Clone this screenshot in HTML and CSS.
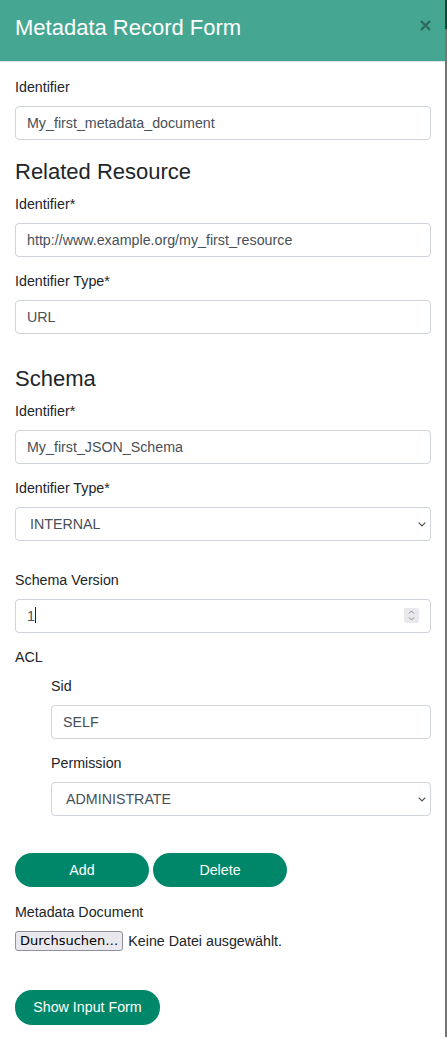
FILE: index.html
```html
<!DOCTYPE html>
<html lang="de">
<head>
<meta charset="utf-8">
<title>Metadata Record Form</title>
<link rel="stylesheet" href="styles.css">
</head>
<body>
<div class="page">
  <div class="modal">
    <div class="modal-header">
      <h2 class="modal-title">Metadata Record Form</h2>
      <button class="close" aria-label="Close">
        <svg width="11" height="11" viewBox="0 0 11 11"><path d="M1 1 L10 10 M10 1 L1 10" stroke="#2c6b5e" stroke-width="2.4" stroke-linecap="butt"/></svg>
      </button>
    </div>
    <div class="modal-body">
      <div class="group">
        <label class="lbl">Identifier</label>
        <input class="field" type="text" value="My_first_metadata_document">
      </div>

      <h3 class="section">Related Resource</h3>
      <div class="group">
        <label class="lbl">Identifier*</label>
        <input class="field" type="text" value="http://www.example.org/my_first_resource">
      </div>
      <div class="group">
        <label class="lbl">Identifier Type*</label>
        <input class="field" type="text" value="URL">
      </div>

      <h3 class="section section-far">Schema</h3>
      <div class="group">
        <label class="lbl">Identifier*</label>
        <input class="field" type="text" value="My_first_JSON_Schema">
      </div>
      <div class="group group-far">
        <label class="lbl">Identifier Type*</label>
        <div class="select-wrap">
          <select class="field select"><option>INTERNAL</option></select>
          <svg class="chev" width="8" height="5" viewBox="0 0 8 5"><path d="M0.7 0.7 L4 4 L7.3 0.7" fill="none" stroke="#505050" stroke-width="1.2"/></svg>
        </div>
      </div>
      <div class="group">
        <label class="lbl">Schema Version</label>
        <div class="select-wrap">
          <input class="field" type="text" value="1">
          <span class="caret"></span>
          <span class="spinner">
            <svg width="15" height="15" viewBox="0 0 15 15"><path d="M5 5.5 L7.5 3 L10 5.5" fill="none" stroke="#8a8a8a" stroke-width="1"/><path d="M5 9.5 L7.5 12 L10 9.5" fill="none" stroke="#8a8a8a" stroke-width="1"/></svg>
          </span>
        </div>
      </div>
      <div class="group group-acl">
        <label class="lbl lbl-acl">ACL</label>
        <div class="acl-list">
          <div class="group">
            <label class="lbl">Sid</label>
            <input class="field" type="text" value="SELF">
          </div>
          <div class="group group-last">
            <label class="lbl">Permission</label>
            <div class="select-wrap">
              <select class="field select"><option>ADMINISTRATE</option></select>
              <svg class="chev" width="8" height="5" viewBox="0 0 8 5"><path d="M0.7 0.7 L4 4 L7.3 0.7" fill="none" stroke="#505050" stroke-width="1.2"/></svg>
            </div>
          </div>
        </div>
      </div>

      <div class="btn-row">
        <button class="btn btn-fixed">Add</button>
        <button class="btn btn-fixed">Delete</button>
      </div>

      <div class="group group-file">
        <label class="lbl">Metadata Document</label>
        <div class="file-row">
          <span class="file-btn">Durchsuchen…</span>
          <span class="file-text">Keine Datei ausgewählt.</span>
        </div>
      </div>

      <button class="btn btn-show">Show Input Form</button>
    </div>
  </div>
  <div class="edge"></div>
</div>
</body>
</html>
```

FILE: styles.css
```css
html, body {
  margin: 0;
  padding: 0;
  background: #ffffff;
}
body {
  font-family: "Liberation Sans", Arial, sans-serif;
  color: #212529;
  overflow: hidden;
}
.page {
  display: flex;
  align-items: flex-start;
  height: 1039px;
}
.modal {
  width: 445px;
  height: 1038px;
  background: #fff;
  border-bottom-left-radius: 4px;
  border-bottom-right-radius: 4px;
}
.edge {
  width: 2px;
  height: 1037px;
  background: linear-gradient(to bottom, #0d4a3b 0, #0d4a3b 29px, #757575 29px, #757575 100%);
}
.modal-header {
  box-sizing: border-box;
  height: 62px;
  background: #45a792;
  border-bottom: 1px solid #dfe3e6;
  display: flex;
  justify-content: space-between;
  align-items: flex-start;
  padding: 15px 14px 0 15px;
}
.modal-title {
  margin: 0;
  font-size: 22px;
  line-height: 26px;
  font-weight: 400;
  color: #ffffff;
}
.close {
  background: none;
  border: 0;
  padding: 0;
  margin-top: 5px;
  width: 11px;
  height: 11px;
  display: flex;
}
.modal-body {
  padding: 14.5px 14px 0 15px;
}
.group {
  margin-bottom: 14px;
}
.group-far {
  margin-bottom: 29px;
}
.lbl {
  display: block;
  font-size: 14.25px;
  line-height: 21px;
  margin-bottom: 8px;
  color: #212529;
}
.lbl-acl {
  margin-bottom: 8px;
}
.acl-list {
  padding-left: 36px;
}
.group-last {
  margin-bottom: 0;
}
.field {
  box-sizing: border-box;
  display: block;
  width: 100%;
  height: 34px;
  padding: 0 11px;
  border: 1px solid #ced4da;
  border-radius: 4px;
  font-family: "Liberation Sans", Arial, sans-serif;
  font-size: 14.25px;
  color: #495057;
  background: #fff;
  outline: none;
}
.select {
  -webkit-appearance: none;
  appearance: none;
  padding-left: 14px;
}
.select-wrap {
  position: relative;
}
.chev {
  position: absolute;
  right: 5px;
  top: 15px;
}
.caret {
  position: absolute;
  left: 20px;
  top: 8px;
  width: 1px;
  height: 16px;
  background: #222;
}
.spinner {
  position: absolute;
  right: 12px;
  top: 9px;
  width: 15px;
  height: 15px;
  background: #e9e9ed;
  border-radius: 2px;
  display: flex;
}
.section {
  margin: 19px 0 9px;
  font-size: 22px;
  line-height: 26.4px;
  font-weight: 400;
  color: #212529;
}
.section-far {
  margin-top: 31.6px;
}
.group-acl {
  margin-bottom: 0;
}
.btn-row {
  margin-top: 37.5px;
  display: flex;
  gap: 4px;
}
.btn {
  box-sizing: border-box;
  height: 33.5px;
  border: 0;
  border-radius: 17px;
  background: #00876a;
  color: #fff;
  font-family: "Liberation Sans", Arial, sans-serif;
  font-size: 14.25px;
  padding: 0;
}
.btn-fixed {
  width: 134px;
}
.group-file {
  margin-top: 14.7px;
}
.file-row {
  display: flex;
  align-items: center;
  gap: 5px;
  height: 20px;
}
.file-btn {
  box-sizing: border-box;
  height: 20px;
  padding: 0 4px;
  border: 1px solid #8f8f9d;
  border-radius: 3px;
  background: #e9e9ed;
  font-family: "DejaVu Sans", sans-serif;
  font-size: 13px;
  line-height: 18px;
  color: #000;
}
.file-text {
  font-size: 14.25px;
  color: #212529;
}
.btn-show {
  display: block;
  margin-top: 39.7px;
  width: 145px;
  height: 34.3px;
}
```
